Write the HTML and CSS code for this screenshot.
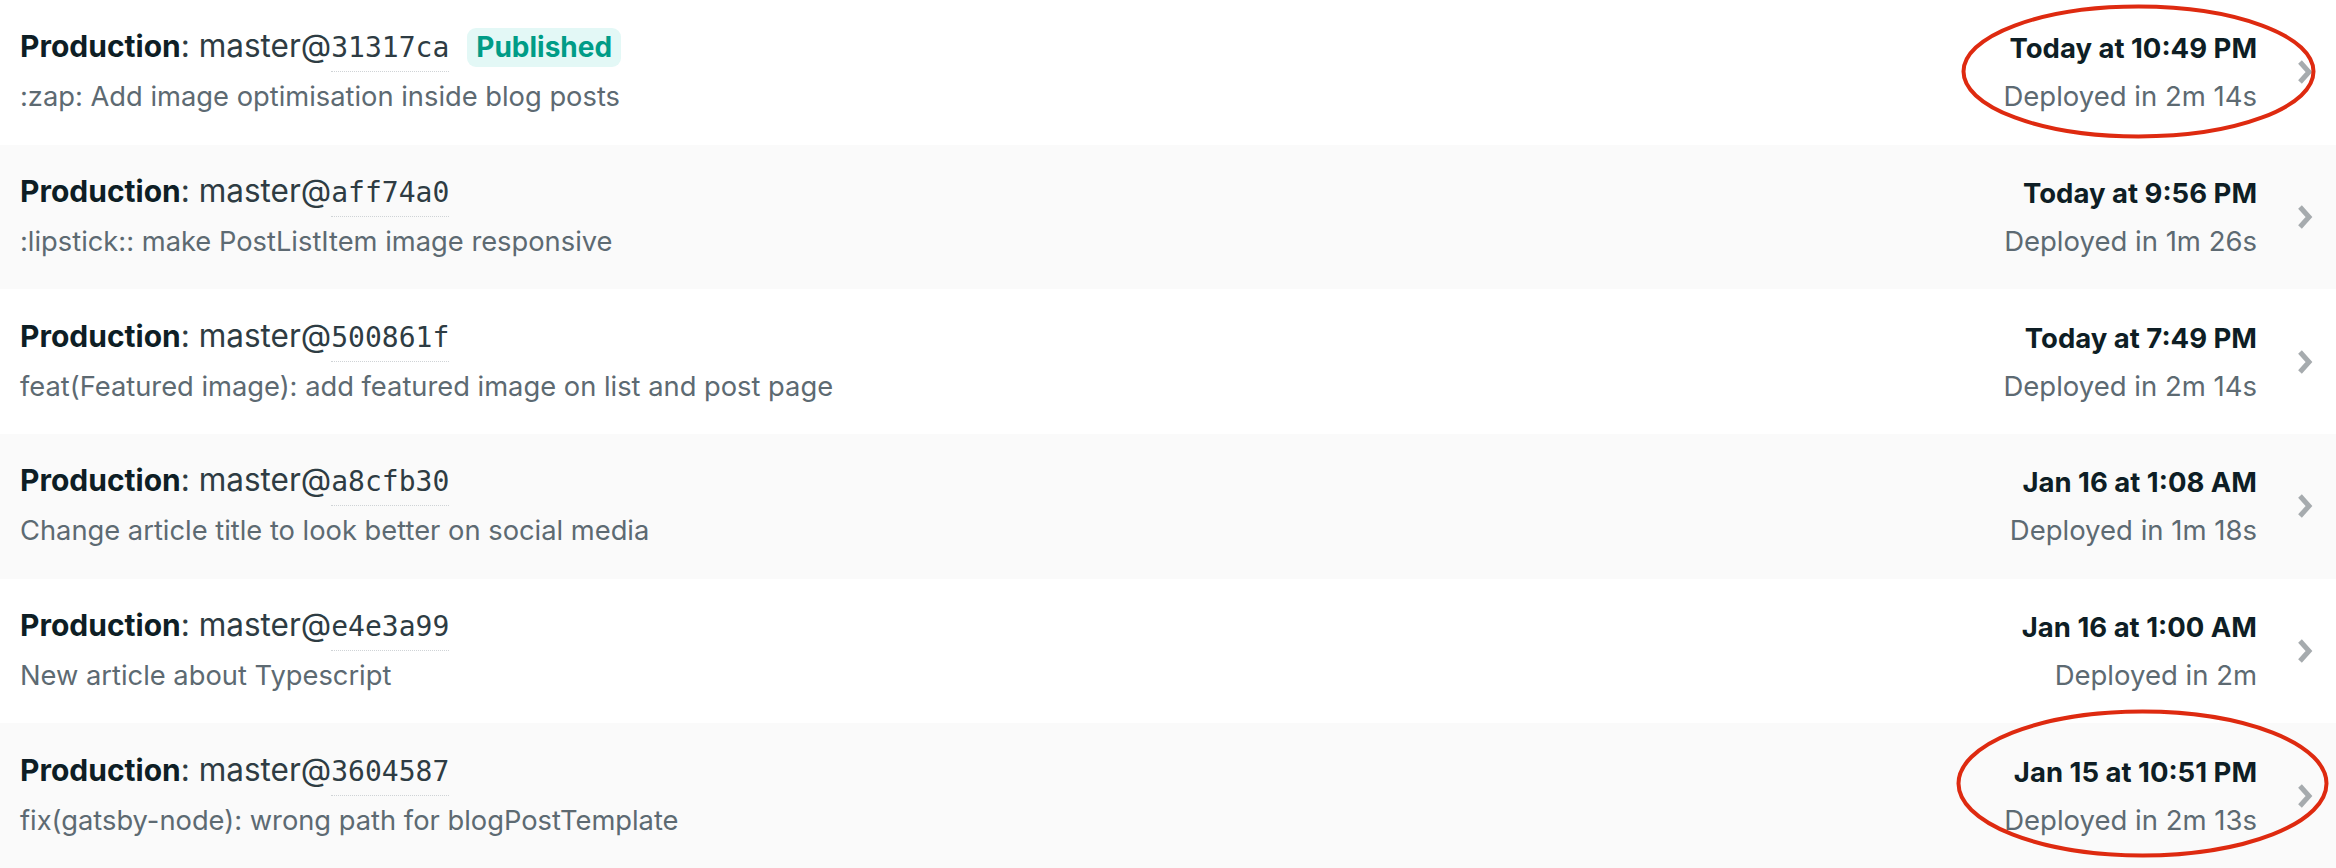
FILE: index.html
```html
<!DOCTYPE html>
<html lang="en">
<head>
<meta charset="utf-8">
<title>Deploys</title>
<link rel="stylesheet" href="styles.css">
</head>
<body>
<ul class="deploys">
  <li class="deploy">
    <div class="info">
      <div class="title"><strong>Production</strong>: master@<span class="hash">31317ca</span><span class="badge">Published</span></div>
      <div class="msg">:zap: Add image optimisation inside blog posts</div>
    </div>
    <div class="meta">
      <div class="date">Today at 10:49 PM</div>
      <div class="dur">Deployed in 2m 14s</div>
    </div>
    <svg class="chev" viewBox="0 0 16 26" width="16" height="26"><polyline points="3,3 12,13 3,23"/></svg>
  </li>
  <li class="deploy">
    <div class="info">
      <div class="title"><strong>Production</strong>: master@<span class="hash">aff74a0</span></div>
      <div class="msg">:lipstick:: make PostListItem image responsive</div>
    </div>
    <div class="meta">
      <div class="date">Today at 9:56 PM</div>
      <div class="dur">Deployed in 1m 26s</div>
    </div>
    <svg class="chev" viewBox="0 0 16 26" width="16" height="26"><polyline points="3,3 12,13 3,23"/></svg>
  </li>
  <li class="deploy">
    <div class="info">
      <div class="title"><strong>Production</strong>: master@<span class="hash">500861f</span></div>
      <div class="msg">feat(Featured image): add featured image on list and post page</div>
    </div>
    <div class="meta">
      <div class="date">Today at 7:49 PM</div>
      <div class="dur">Deployed in 2m 14s</div>
    </div>
    <svg class="chev" viewBox="0 0 16 26" width="16" height="26"><polyline points="3,3 12,13 3,23"/></svg>
  </li>
  <li class="deploy">
    <div class="info">
      <div class="title"><strong>Production</strong>: master@<span class="hash">a8cfb30</span></div>
      <div class="msg">Change article title to look better on social media</div>
    </div>
    <div class="meta">
      <div class="date">Jan 16 at 1:08 AM</div>
      <div class="dur">Deployed in 1m 18s</div>
    </div>
    <svg class="chev" viewBox="0 0 16 26" width="16" height="26"><polyline points="3,3 12,13 3,23"/></svg>
  </li>
  <li class="deploy">
    <div class="info">
      <div class="title"><strong>Production</strong>: master@<span class="hash">e4e3a99</span></div>
      <div class="msg">New article about Typescript</div>
    </div>
    <div class="meta">
      <div class="date">Jan 16 at 1:00 AM</div>
      <div class="dur">Deployed in 2m</div>
    </div>
    <svg class="chev" viewBox="0 0 16 26" width="16" height="26"><polyline points="3,3 12,13 3,23"/></svg>
  </li>
  <li class="deploy">
    <div class="info">
      <div class="title"><strong>Production</strong>: master@<span class="hash">3604587</span></div>
      <div class="msg">fix(gatsby-node): wrong path for blogPostTemplate</div>
    </div>
    <div class="meta">
      <div class="date">Jan 15 at 10:51 PM</div>
      <div class="dur">Deployed in 2m 13s</div>
    </div>
    <svg class="chev" viewBox="0 0 16 26" width="16" height="26"><polyline points="3,3 12,13 3,23"/></svg>
  </li>
</ul>
<svg class="marks" width="2336" height="868" viewBox="0 0 2336 868">
  <ellipse cx="2138.5" cy="71.5" rx="175" ry="65"/>
  <ellipse cx="2142.5" cy="783.5" rx="184" ry="72"/>
</svg>
</body>
</html>
```
FILE: styles.css
```css
html, body {
  margin: 0;
  padding: 0;
  background: #ffffff;
}
body {
  font-family: Inter, "Liberation Sans", sans-serif;
  color: #0e1e25;
  width: 2336px;
  height: 868px;
  overflow: hidden;
  position: relative;
}
.deploys {
  list-style: none;
  margin: 0;
  padding: 0;
}
.deploy {
  display: flex;
  align-items: center;
  height: 144.67px;
  padding: 0 23px 0 20px;
  box-sizing: border-box;
  background: #ffffff;
}
.deploy:nth-child(even) {
  background: #fafafa;
}
.info {
  flex: 1;
  display: flex;
  flex-direction: column;
}
.title {
  font-size: 31.5px;
  line-height: 42px;
  color: #2e3c43;
  display: flex;
  align-items: baseline;
  white-space: pre;
}
.title strong {
  font-weight: 700;
  font-size: 30px;
  color: #0e1e25;
}
.hash {
  font-family: "DejaVu Sans Mono", "Liberation Mono", monospace;
  font-size: 28px;
  color: #2e3c43;
  border-bottom: 1px dotted #cfd3d6;
  padding-bottom: 2px;
}
.badge {
  margin-left: 18px;
  font-size: 28px;
  font-weight: 700;
  color: #009c87;
  background: #e3f8f6;
  border-radius: 9px;
  padding: 2px 9px;
  line-height: 35px;
}
.msg {
  margin-top: 2px;
  font-size: 27.3px;
  line-height: 45px;
  color: #5d6a72;
}
.meta {
  display: flex;
  flex-direction: column;
  align-items: flex-end;
  gap: 8px;
}
.date {
  font-size: 27.5px;
  line-height: 40px;
  font-weight: 700;
  color: #0e1e25;
}
.dur {
  font-size: 27.5px;
  line-height: 40px;
  color: #5d6a72;
}
.chev {
  margin-left: 40px;
  fill: none;
  stroke: #a6abae;
  stroke-width: 5;
}
.marks {
  position: absolute;
  left: 0;
  top: 0;
  pointer-events: none;
  fill: none;
  stroke: #de2a10;
  stroke-width: 4;
}
```
